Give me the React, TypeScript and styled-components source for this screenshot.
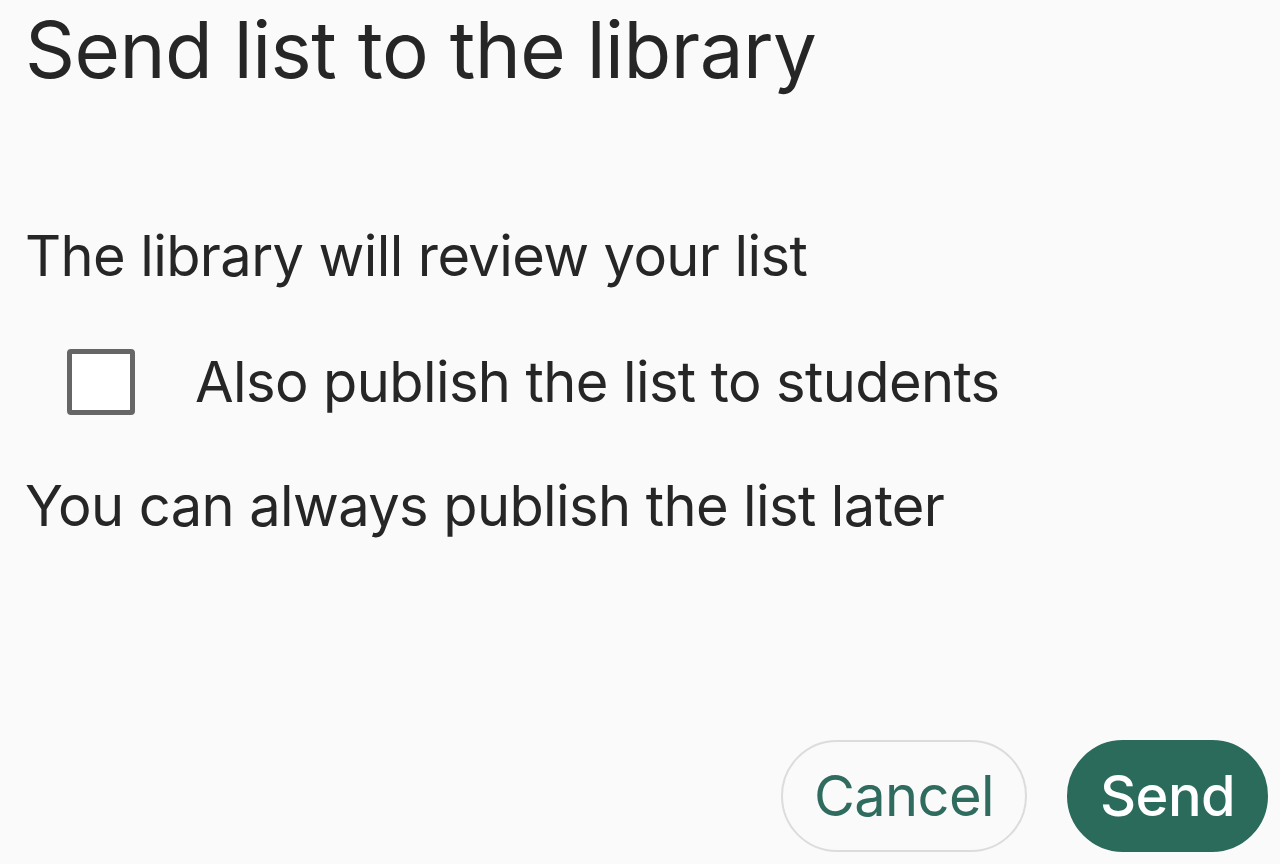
import React from "react";
import styled, { createGlobalStyle } from "styled-components";

const Global = createGlobalStyle`
  html, body {
    margin: 0;
    padding: 0;
    background: #fafafa;
  }
  body {
    font-family: Inter, Lato, Arial, sans-serif;
    color: #262626;
  }
`;

const Dialog = styled.div`
  width: 1280px;
  height: 864px;
  box-sizing: border-box;
  padding: 2px 12px 12px 25px;
  display: flex;
  flex-direction: column;
`;

const Title = styled.h1`
  margin: 0;
  font-size: 78px;
  font-weight: 400;
  line-height: 96px;
  letter-spacing: -0.5px;
  color: #262626;
`;

const Body = styled.div`
  margin-top: 124px;
  display: flex;
  flex-direction: column;
`;

const Text = styled.p`
  margin: 0;
  font-size: 56px;
  line-height: 68px;
  letter-spacing: -0.6px;
`;

const CheckRow = styled.label`
  display: flex;
  align-items: center;
  gap: 60px;
  margin: 58px 0 56px 42px;
  font-size: 56px;
  line-height: 68px;
  letter-spacing: -0.6px;
`;

const Box = styled.span`
  width: 68px;
  height: 66px;
  box-sizing: border-box;
  border: 5px solid #666;
  border-radius: 4px;
  background: #fff;
`;

const Actions = styled.div`
  margin-top: auto;
  display: flex;
  justify-content: flex-end;
  gap: 40px;
`;

const Button = styled.button<{ $primary?: boolean }>`
  height: 112px;
  padding: 0 ${(p) => (p.$primary ? "31px" : "31px")};
  border-radius: 56px;
  font-family: inherit;
  font-size: 56px;
  font-weight: ${(p) => (p.$primary ? 500 : 400)};
  letter-spacing: -0.6px;
  border: 2px solid ${(p) => (p.$primary ? "#2a6b5c" : "#dcdcdc")};
  background: ${(p) => (p.$primary ? "#2a6b5c" : "#fafafa")};
  color: ${(p) => (p.$primary ? "#ffffff" : "#2f6b5e")};
`;

export default function App() {
  return (
    <>
      <Global />
      <Dialog>
        <Title>Send list to the library</Title>
        <Body>
          <Text>The library will review your list</Text>
          <CheckRow>
            <Box />
            Also publish the list to students
          </CheckRow>
          <Text>You can always publish the list later</Text>
        </Body>
        <Actions>
          <Button>Cancel</Button>
          <Button $primary>Send</Button>
        </Actions>
      </Dialog>
    </>
  );
}
